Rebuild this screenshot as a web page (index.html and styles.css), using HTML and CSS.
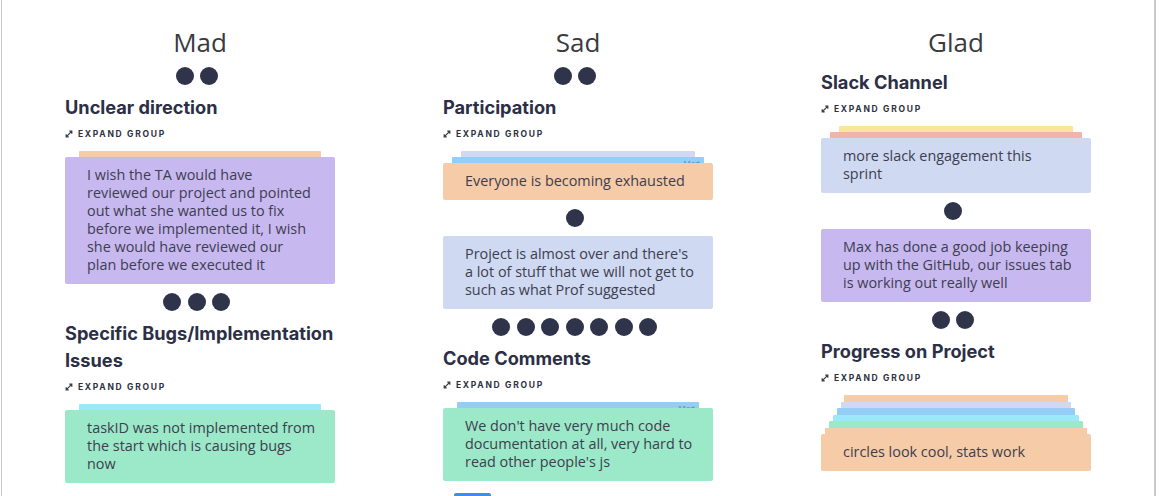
FILE: index.html
```html
<!DOCTYPE html>
<html lang="en">
<head>
<meta charset="utf-8">
<title>Retro board</title>
<link rel="stylesheet" href="styles.css">
</head>
<body>
<main class="board">
  <section class="column">
    <h2 class="col-title">Mad</h2>
    <div class="votes"><span class="dot"></span><span class="dot"></span></div>
    <div class="group">
      <h3 class="group-title">Unclear direction</h3>
      <div class="expand"><svg class="expand-icon" viewBox="0 0 8 8"><path d="M1.2 6.8 6.8 1.2M4.3 1.2H6.8V3.7M1.2 4.3V6.8H3.7"/></svg>Expand group</div>
      <div class="stack">
        <div class="layer peach" style="margin: 0 14px"></div>
        <div class="card purple">I wish the TA would have reviewed our project and pointed out what she wanted us to fix before we implemented it, I wish she would have reviewed our plan before we executed it</div>
      </div>
    </div>
    <div class="votes"><span class="dot"></span><span class="dot"></span><span class="dot"></span></div>
    <div class="group">
      <h3 class="group-title">Specific Bugs/Implementation Issues</h3>
      <div class="expand"><svg class="expand-icon" viewBox="0 0 8 8"><path d="M1.2 6.8 6.8 1.2M4.3 1.2H6.8V3.7M1.2 4.3V6.8H3.7"/></svg>Expand group</div>
      <div class="stack">
        <div class="layer cyan" style="margin: 0 14px"></div>
        <div class="card green">taskID was not implemented from the start which is causing bugs now</div>
      </div>
    </div>
  </section>

  <section class="column">
    <h2 class="col-title">Sad</h2>
    <div class="votes"><span class="dot"></span><span class="dot"></span></div>
    <div class="group">
      <h3 class="group-title">Participation</h3>
      <div class="expand"><svg class="expand-icon" viewBox="0 0 8 8"><path d="M1.2 6.8 6.8 1.2M4.3 1.2H6.8V3.7M1.2 4.3V6.8H3.7"/></svg>Expand group</div>
      <div class="stack">
        <div class="layer lavender" style="margin: 0 18px"></div>
        <div class="layer blue" style="margin: 0 9px"><span class="layer-label">Mad</span></div>
        <div class="card peach">Everyone is becoming exhausted</div>
      </div>
    </div>
    <div class="votes"><span class="dot"></span></div>
    <div class="card lavender">Project is almost over and there's a lot of stuff that we will not get to such as what Prof suggested</div>
    <div class="votes"><span class="dot"></span><span class="dot"></span><span class="dot"></span><span class="dot"></span><span class="dot"></span><span class="dot"></span><span class="dot"></span></div>
    <div class="group">
      <h3 class="group-title">Code Comments</h3>
      <div class="expand"><svg class="expand-icon" viewBox="0 0 8 8"><path d="M1.2 6.8 6.8 1.2M4.3 1.2H6.8V3.7M1.2 4.3V6.8H3.7"/></svg>Expand group</div>
      <div class="stack">
        <div class="layer blue" style="margin: 0 14px"><span class="layer-label">Mad</span></div>
        <div class="card green">We don't have very much code documentation at all, very hard to read other people's js</div>
      </div>
    </div>
    <button class="add-btn" type="button" aria-label="Add"></button>
  </section>

  <section class="column">
    <h2 class="col-title">Glad</h2>
    <div class="group">
      <h3 class="group-title">Slack Channel</h3>
      <div class="expand"><svg class="expand-icon" viewBox="0 0 8 8"><path d="M1.2 6.8 6.8 1.2M4.3 1.2H6.8V3.7M1.2 4.3V6.8H3.7"/></svg>Expand group</div>
      <div class="stack">
        <div class="layer yellow" style="margin: 0 18px"></div>
        <div class="layer salmon" style="margin: 0 9px"></div>
        <div class="card lavender">more slack engagement this sprint</div>
      </div>
    </div>
    <div class="votes"><span class="dot"></span></div>
    <div class="card purple">Max has done a good job keeping up with the GitHub, our issues tab is working out really well</div>
    <div class="votes"><span class="dot"></span><span class="dot"></span></div>
    <div class="group">
      <h3 class="group-title">Progress on Project</h3>
      <div class="expand"><svg class="expand-icon" viewBox="0 0 8 8"><path d="M1.2 6.8 6.8 1.2M4.3 1.2H6.8V3.7M1.2 4.3V6.8H3.7"/></svg>Expand group</div>
      <div class="stack stack-deep">
        <div class="layer peach" style="margin: 0 23px"></div>
        <div class="layer lavender" style="margin: 0 20px"></div>
        <div class="layer blue" style="margin: 0 16px"></div>
        <div class="layer cyan" style="margin: 0 12px"></div>
        <div class="layer green" style="margin: 0 8px"></div>
        <div class="layer peach" style="margin: 0 4px"></div>
        <div class="card peach">circles look cool, stats work</div>
      </div>
    </div>
  </section>
</main>
</body>
</html>
```

FILE: styles.css
```css
* {
  box-sizing: border-box;
}

html, body {
  margin: 0;
  padding: 0;
  background: #ffffff;
  overflow: hidden;
}

.board {
  margin-left: 1px;
  width: 1155px;
  min-height: 496px;
  border-left: 1px solid #c6c6c6;
  border-right: 2px solid #cacaca;
  padding: 26px 0 0 63px;
  display: grid;
  grid-template-columns: 270px 270px 270px;
  column-gap: 108px;
  align-items: start;
}

.column {
  display: flex;
  flex-direction: column;
}

.col-title {
  margin: 0;
  font-family: "Open Sans", "Liberation Sans", sans-serif;
  font-weight: 400;
  font-size: 26px;
  line-height: 32px;
  color: #3a3a3f;
  text-align: center;
}

.votes {
  display: flex;
  justify-content: center;
  margin: 9px 0;
  height: 18px;
}

.dot {
  width: 18px;
  height: 18px;
  border-radius: 50%;
  background: #30344b;
  margin-right: 6.5px;
  flex: none;
}

.group {
  display: flex;
  flex-direction: column;
}

.col-title + .group {
  margin-top: 11px;
}

.group-title {
  margin: 0;
  font-family: "Inter", "Lato", sans-serif;
  font-weight: 700;
  font-size: 18.2px;
  line-height: 27px;
  color: #2c2f45;
}

.expand {
  margin-top: 6px;
  display: flex;
  align-items: center;
  gap: 5px;
  height: 14px;
  font-family: "Inter", "Lato", sans-serif;
  font-weight: 700;
  font-size: 8.5px;
  letter-spacing: 1.7px;
  text-transform: uppercase;
  color: #2e3040;
}

.expand-icon {
  width: 8px;
  height: 8px;
  flex: none;
  fill: none;
  stroke: #3a3a44;
  stroke-width: 1.2;
}

.stack {
  margin-top: 10px;
  display: flex;
  flex-direction: column;
}

.layer {
  height: 6px;
  border-radius: 1px 1px 0 0;
  overflow: hidden;
  text-align: right;
  padding: 1px 4px 0 0;
}

.stack-deep .layer {
  height: 6.5px;
}

.layer-label {
  display: block;
  font-family: "Open Sans", sans-serif;
  font-size: 8px;
  line-height: 9px;
  color: #6b7fa0;
}

.card {
  border-radius: 2px;
  padding: 9px 19px 10px 22px;
  font-family: "Open Sans", "Liberation Sans", sans-serif;
  font-size: 14.4px;
  line-height: 18px;
  color: #3d3e50;
}

.purple { background: #c8b8f0; }
.peach { background: #f6cba7; }
.lavender { background: #cfd9f2; }
.green { background: #9be9c8; }
.blue { background: #94cdf5; }
.cyan { background: #9de8f8; }
.salmon { background: #f2b4a9; }
.yellow { background: #fbe59b; }

.add-btn {
  margin: 12px 0 0 11px;
  width: 37px;
  height: 24px;
  border: 0;
  padding: 0;
  border-radius: 2px;
  background: #3b8ef2;
}
```
